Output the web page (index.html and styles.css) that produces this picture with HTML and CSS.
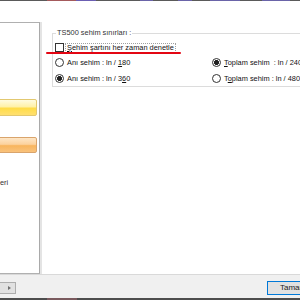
FILE: index.html
```html
<!DOCTYPE html>
<html lang="tr">
<head>
    <meta charset="UTF-8">
    <meta name="viewport" content="width=device-width, initial-scale=1.0">
    <title>Sehim ayarları</title>
    <link rel="stylesheet" href="styles.css">
</head>
<body>

    <div class="screen">
        <div class="top-edge"></div>

        <div class="main">
            <!-- sol panel -->
            <div class="side">
                <div class="side-panel">
                    <div class="side-btn side-btn-yellow"></div>
                    <div class="side-btn side-btn-orange"></div>
                    <div class="side-text">eri</div>
                </div>
                <div class="splitter"></div>
            </div>

            <!-- sehim sınırları -->
            <div class="content">
                <fieldset class="group">
                    <legend>TS500 sehim sınırları :</legend>
                    <div class="check-row">
                        <span class="check-box"></span>
                        <span class="check-label"><u>Ş</u>ehim şartını her zaman denetle</span>
                    </div>
                    <div class="radio-grid">
                        <div class="radio-item">
                            <span class="radio"></span>
                            <span>Anı sehim : ln / <u>1</u>80</span>
                        </div>
                        <div class="radio-item">
                            <span class="radio checked"></span>
                            <span><u>T</u>oplam sehim &nbsp;: ln / 240</span>
                        </div>
                        <div class="radio-item">
                            <span class="radio checked"></span>
                            <span>Anı sehim : ln / 3<u>6</u>0</span>
                        </div>
                        <div class="radio-item">
                            <span class="radio"></span>
                            <span>T<u>o</u>plam sehim : ln / 480</span>
                        </div>
                    </div>
                </fieldset>
                <div class="mark"></div>
            </div>
        </div>

        <!-- alt çubuk -->
        <div class="footer">
            <div class="small-btn"><span class="arrow"></span></div>
            <div class="ok-btn">Tamam</div>
        </div>

        <div class="bottom-edge"></div>
    </div>

</body>
</html>
```

FILE: styles.css
```css
/* temel */
body {
    margin: 0;
    font-family: 'Liberation Sans', Arial, sans-serif;
    color: #111;
    background-color: #fff;
}

.screen {
    width: 300px;
    height: 300px;
    overflow: hidden;
    display: flex;
    flex-direction: column;
}

.top-edge {
    height: 1px;
    flex: none;
    background: linear-gradient(to right,
        #5a5a5a 0, #5a5a5a 47px,
        #a45a5c 47px, #a45a5c 76px,
        #6b5eb2 76px, #6b5eb2 96px,
        #5a5a5a 96px, #5a5a5a 140px,
        #6a64a8 140px, #6a64a8 153px,
        #5a5a5a 153px, #5a5a5a 178px,
        #6a64a8 178px, #6a64a8 192px,
        #5a5a5a 192px, #5a5a5a 210px,
        #6a64a8 210px, #6a64a8 240px,
        #5a5a5a 240px, #5a5a5a 262px,
        #6a64a8 262px, #6a64a8 290px,
        #5a5a5a 290px);
}

.main {
    height: 273px;
    flex: none;
    display: flex;
    border-bottom: 1px solid #d9d9d9;
    overflow: hidden;
}

/* sol panel */
.side {
    display: flex;
    padding-top: 21px;
    flex: none;
}

.side-panel {
    width: 40px;
    box-sizing: border-box;
    border-top: 1px solid #b0b0b0;
    border-right: 1px solid #a9a9a9;
    border-bottom: 1px solid #b0b0b0;
    background-color: #fff;
    overflow: hidden;
}

.splitter {
    width: 2px;
    background-color: #e4e4e4;
}

.side-btn {
    width: 42px;
    margin-left: -5px;
    box-sizing: border-box;
    border-radius: 2px;
}

.side-btn-yellow {
    margin-top: 76px;
    height: 17px;
    border: 1px solid #e2c870;
    background: linear-gradient(#fffbe0, #fff1a8 45%, #ffdc48 55%, #ffe070);
}

.side-btn-orange {
    margin-top: 21px;
    height: 16px;
    border: 1px solid #d9a46c;
    background: linear-gradient(#fee6c6, #fcd29e 45%, #f8b55e 55%, #f9c27c);
}

.side-text {
    margin-top: 26px;
    font-size: 7.4px;
    line-height: 8px;
    color: #333;
}

/* grup kutusu */
.content {
    flex: 1;
    position: relative;
    padding: 28px 0 0 10px;
    overflow: hidden;
}

.group {
    margin: 0;
    width: 280px;
    min-width: 0;
    box-sizing: border-box;
    border: 1px solid #dcdcdc;
    padding: 0 0 2px 2px;
    font-size: 7.4px;
}

.group legend {
    margin-left: 1px;
    padding: 0 1px;
    line-height: 8px;
    color: #333;
}

.check-row {
    display: flex;
    align-items: center;
    height: 11px;
    margin-top: 5px;
}

.check-box {
    width: 9px;
    height: 9px;
    box-sizing: border-box;
    border: 1px solid #333;
    background-color: #fff;
}

.check-label {
    margin-left: 1px;
    padding: 0 1px;
    line-height: 8px;
    border: 1px dotted #a0a0a0;
}

.radio-grid {
    display: grid;
    grid-template-columns: 157px auto;
    grid-auto-rows: 11px;
    row-gap: 5px;
    margin-top: 4px;
}

.radio-item {
    display: flex;
    align-items: center;
    gap: 3px;
    white-space: nowrap;
    line-height: 11px;
}

.radio {
    width: 9px;
    height: 9px;
    flex: none;
    box-sizing: border-box;
    border: 1px solid #333;
    border-radius: 50%;
    background-color: #fff;
}

.radio.checked {
    background: radial-gradient(circle, #222 0, #222 2.2px, #fff 2.8px);
}

/* kırmızı işaret çizgisi */
.mark {
    position: absolute;
    left: 4px;
    top: 51px;
    width: 135px;
    height: 2px;
    border-radius: 1px;
    background-color: #e30613;
}

/* alt çubuk */
.footer {
    height: 23px;
    flex: none;
    display: flex;
    justify-content: space-between;
    align-items: flex-start;
    background-color: #f0f0f0;
}

.small-btn {
    margin: 7px 0 0 -4px;
    width: 20px;
    height: 12px;
    box-sizing: border-box;
    border: 1px solid #adadad;
    background-color: #e1e1e1;
    display: flex;
    align-items: center;
    padding-left: 11px;
}

.arrow {
    width: 0;
    height: 0;
    border-top: 2.5px solid transparent;
    border-bottom: 2.5px solid transparent;
    border-left: 3px solid #707070;
}

.ok-btn {
    flex: none;
    margin: 6px -19px 0 0;
    width: 52px;
    height: 14px;
    box-sizing: border-box;
    border: 1px solid #0078d7;
    background-color: #e1e1e1;
    padding-left: 12px;
    font-size: 8px;
    line-height: 12px;
    color: #1a1a1a;
}

.bottom-edge {
    height: 2px;
    flex: none;
    background: linear-gradient(to right,
        #4d4d4d 0, #4d4d4d 47px,
        #7a5a5e 47px, #7a5a5e 77px,
        #4d4d4d 77px);
}
```
